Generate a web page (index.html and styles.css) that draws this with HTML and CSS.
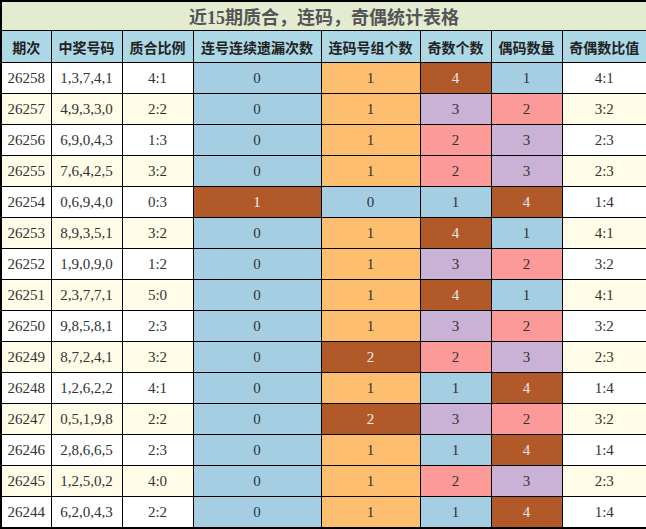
FILE: index.html
```html
<!DOCTYPE html>
<html lang="zh">
<head>
<meta charset="utf-8">
<link rel="stylesheet" href="styles.css">
</head>
<body>
<table class="stat">
<colgroup>
<col class="c1"><col class="c2"><col class="c3"><col class="c4"><col class="c5"><col class="c6"><col class="c7"><col class="c8">
</colgroup>
<tr class="title"><td colspan="8">近15期质合，连码，奇偶统计表格</td></tr>
<tr class="head"><td>期次</td><td>中奖号码</td><td>质合比例</td><td>连号连续遗漏次数</td><td>连码号组个数</td><td>奇数个数</td><td>偶码数量</td><td>奇偶数比值</td></tr>
<tr><td>26258</td><td>1,3,7,4,1</td><td>4:1</td><td class="bl">0</td><td class="or">1</td><td class="br">4</td><td class="bl">1</td><td>4:1</td></tr>
<tr class="alt"><td>26257</td><td>4,9,3,3,0</td><td>2:2</td><td class="bl">0</td><td class="or">1</td><td class="pu">3</td><td class="pk">2</td><td>3:2</td></tr>
<tr><td>26256</td><td>6,9,0,4,3</td><td>1:3</td><td class="bl">0</td><td class="or">1</td><td class="pk">2</td><td class="pu">3</td><td>2:3</td></tr>
<tr class="alt"><td>26255</td><td>7,6,4,2,5</td><td>3:2</td><td class="bl">0</td><td class="or">1</td><td class="pk">2</td><td class="pu">3</td><td>2:3</td></tr>
<tr><td>26254</td><td>0,6,9,4,0</td><td>0:3</td><td class="br">1</td><td class="bl">0</td><td class="bl">1</td><td class="br">4</td><td>1:4</td></tr>
<tr class="alt"><td>26253</td><td>8,9,3,5,1</td><td>3:2</td><td class="bl">0</td><td class="or">1</td><td class="br">4</td><td class="bl">1</td><td>4:1</td></tr>
<tr><td>26252</td><td>1,9,0,9,0</td><td>1:2</td><td class="bl">0</td><td class="or">1</td><td class="pu">3</td><td class="pk">2</td><td>3:2</td></tr>
<tr class="alt"><td>26251</td><td>2,3,7,7,1</td><td>5:0</td><td class="bl">0</td><td class="or">1</td><td class="br">4</td><td class="bl">1</td><td>4:1</td></tr>
<tr><td>26250</td><td>9,8,5,8,1</td><td>2:3</td><td class="bl">0</td><td class="or">1</td><td class="pu">3</td><td class="pk">2</td><td>3:2</td></tr>
<tr class="alt"><td>26249</td><td>8,7,2,4,1</td><td>3:2</td><td class="bl">0</td><td class="br">2</td><td class="pk">2</td><td class="pu">3</td><td>2:3</td></tr>
<tr><td>26248</td><td>1,2,6,2,2</td><td>4:1</td><td class="bl">0</td><td class="or">1</td><td class="bl">1</td><td class="br">4</td><td>1:4</td></tr>
<tr class="alt"><td>26247</td><td>0,5,1,9,8</td><td>2:2</td><td class="bl">0</td><td class="br">2</td><td class="pu">3</td><td class="pk">2</td><td>3:2</td></tr>
<tr><td>26246</td><td>2,8,6,6,5</td><td>2:3</td><td class="bl">0</td><td class="or">1</td><td class="bl">1</td><td class="br">4</td><td>1:4</td></tr>
<tr class="alt"><td>26245</td><td>1,2,5,0,2</td><td>4:0</td><td class="bl">0</td><td class="or">1</td><td class="pk">2</td><td class="pu">3</td><td>2:3</td></tr>
<tr><td>26244</td><td>6,2,0,4,3</td><td>2:2</td><td class="bl">0</td><td class="or">1</td><td class="bl">1</td><td class="br">4</td><td>1:4</td></tr>
</table>
</body>
</html>
```

FILE: styles.css
```css
html, body {
  margin: 0;
  padding: 0;
  background: #fff;
}
.stat {
  border-collapse: collapse;
  width: 646px;
  table-layout: fixed;
  border: 2px solid #000;
  font-family: "Liberation Serif", "Noto Sans CJK SC", serif;
  font-size: 15px;
  color: #333;
}
.c1 { width: 50px; }
.c2 { width: 71px; }
.c3 { width: 71px; }
.c4 { width: 128px; }
.c5 { width: 99px; }
.c6 { width: 71px; }
.c7 { width: 71px; }
.c8 { width: 85px; }
.stat td {
  border: 1px solid #000;
  text-align: center;
  padding: 0;
  height: 30px;
  white-space: nowrap;
}
.stat .title td {
  height: 28px;
  background: #e3ebd1;
  color: #555;
  font-weight: bold;
  font-size: 18px;
  font-family: "Liberation Serif", "Noto Sans CJK SC", serif;
}
.stat .head td {
  height: 31px;
  background: #add8e6;
  color: #222;
  font-weight: bold;
  font-size: 14px;
  font-family: "Noto Sans CJK SC", sans-serif;
}
.stat .alt td {
  background: #fffde8;
}
.stat td.bl { background: #a6cee3; }
.stat td.or { background: #fdbf6f; }
.stat td.br { background: #b15928; color: #eee; }
.stat td.pu { background: #cab2d6; }
.stat td.pk { background: #fb9a99; }
```
